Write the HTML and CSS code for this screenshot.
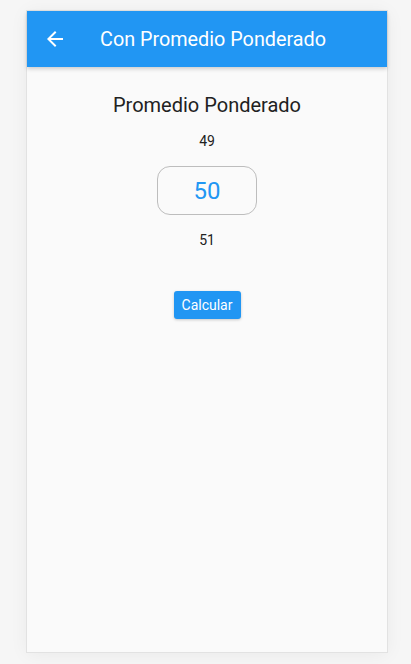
FILE: index.html
```html
<!DOCTYPE html>
<html>
<head>
<meta charset="utf-8">
<link rel="stylesheet" href="styles.css">
</head>
<body>
<div class="phone">
  <header class="appbar">
    <svg class="back" width="24" height="24" viewBox="0 0 24 24"><path d="M20 11H7.83l5.59-5.59L12 4l-8 8 8 8 1.41-1.41L7.83 13H20v-2z" fill="#fff"/></svg>
    <span class="apptitle">Con Promedio Ponderado</span>
  </header>
  <main class="content">
    <div class="heading">Promedio Ponderado</div>
    <div class="num">49</div>
    <div class="picker">50</div>
    <div class="num">51</div>
    <button class="btn">Calcular</button>
  </main>
</div>
</body>
</html>
```
FILE: styles.css
```css
html, body { margin: 0; padding: 0; }
body {
  background: #f6f6f6;
  font-family: Roboto, "Noto Sans", sans-serif;
  width: 411px;
  height: 664px;
  padding-top: 11px;
  box-sizing: border-box;
}
.phone {
  margin-left: 27px;
  width: 360px;
  height: 641px;
  background: #fafafa;
  box-shadow: 0 0 0 1px #e2e2e2, 0 2px 18px rgba(0,0,0,0.06);
  display: flex;
  flex-direction: column;
}
.appbar {
  height: 56px;
  background: #2196f3;
  display: flex;
  align-items: center;
  box-shadow: 0 2px 4px rgba(0,0,0,0.18);
  flex-shrink: 0;
}
.back { margin-left: 16px; }
.apptitle {
  margin-left: 33px;
  color: #fff;
  font-size: 19.8px;
  font-weight: 400;
  letter-spacing: 0;
}
.content {
  display: flex;
  flex-direction: column;
  align-items: center;
  padding-top: 26px;
}
.heading {
  font-size: 20px;
  line-height: 24px;
  color: #212121;
}
.num {
  font-size: 14px;
  line-height: 20px;
  color: #212121;
}
.heading + .num { margin-top: 14px; }
.picker {
  margin-top: 15px;
  margin-bottom: 15px;
  width: 100px;
  height: 49px;
  box-sizing: border-box;
  border: 1px solid #bdbdbd;
  border-radius: 13px;
  display: flex;
  align-items: center;
  justify-content: center;
  color: #2196f3;
  font-size: 24px;
}
.btn {
  margin-top: 41px;
  height: 28px;
  width: 67px;
  padding: 0;
  border: none;
  border-radius: 3px;
  background: #2196f3;
  color: #fff;
  font-family: Roboto, sans-serif;
  font-size: 14px;
  box-shadow: 0 1px 3px rgba(0,0,0,0.2);
}
```
